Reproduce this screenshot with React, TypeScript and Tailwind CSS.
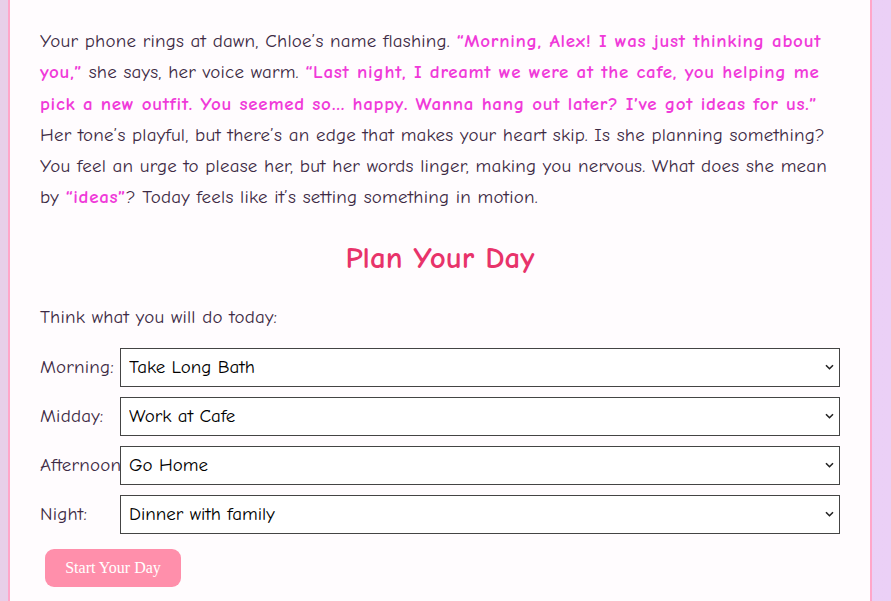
import React from "react";

const SLOTS: { label: string; value: string; options: string[] }[] = [
  { label: "Morning:", value: "Take Long Bath", options: ["Take Long Bath", "Go Jogging", "Sleep In"] },
  { label: "Midday:", value: "Work at Cafe", options: ["Work at Cafe", "Go Shopping", "Visit Chloe"] },
  { label: "Afternoon:", value: "Go Home", options: ["Go Home", "Go to the Park", "Work at Cafe"] },
  { label: "Night:", value: "Dinner with family", options: ["Dinner with family", "Go Out with Chloe", "Stay In"] },
];

const font = { fontFamily: '"Comic Sans MS", "Comic Neue", "DejaVu Sans", sans-serif' };

function Quote({ children }: { children: React.ReactNode }) {
  return <span className="font-bold tracking-[0.7px] text-[#f03ad9]">{children}</span>;
}

export default function App() {
  return (
    <div
      className="min-h-[601px] w-full bg-gradient-to-r from-[#e8cfe9] to-[#ebd0f6] text-[#3d2a44]"
      style={font}
    >
      <div className="ml-[8px] min-h-[601px] w-[864px] border-x-2 border-[#ffa6c9] bg-[#fffcfe] px-[30px] pt-[26px] pb-[13px]">
        <p className="whitespace-nowrap text-[19px] leading-[31.3px] tracking-[0.2px]">
          Your phone rings at dawn, Chloe’s name flashing.{" "}
          <Quote>
            “Morning, Alex! I was just thinking about
            <br />
            you,”
          </Quote>{" "}
          she says, her voice warm.{" "}
          <Quote>
            “Last night, I dreamt we were at the cafe, you helping me
            <br />
            pick a new outfit. You seemed so… happy. Wanna hang out later? I’ve got ideas for us.”
          </Quote>
          <br />
          Her tone’s playful, but there’s an edge that makes your heart skip. Is she planning something?
          <br />
          You feel an urge to please her, but her words linger, making you nervous. What does she mean
          <br />
          by <Quote>“ideas”</Quote>? Today feels like it’s setting something in motion.
        </p>

        <h2 className="mt-[26px] text-center text-[31px] font-bold leading-[36px] text-[#e8336a]">Plan Your Day</h2>

        <p className="mt-[28px] text-[19px] leading-[26px] tracking-[0.2px]">Think what you will do today:</p>

        <div className="mt-[18px] flex flex-col gap-[10px]">
          {SLOTS.map((slot) => (
            <div key={slot.label} className="flex items-center">
              <label className="w-[80px] shrink-0 whitespace-nowrap text-[19px] tracking-[0.2px]">{slot.label}</label>
              <div className="relative min-w-0 flex-1">
                <select
                  defaultValue={slot.value}
                  className="block h-[39px] w-full appearance-none border border-[#444] bg-white pl-[8px] text-[19px] text-black"
                  style={font}
                >
                  {slot.options.map((o) => (
                    <option key={o}>{o}</option>
                  ))}
                </select>
                <svg
                  className="pointer-events-none absolute right-[6px] top-1/2 -translate-y-1/2"
                  width="9"
                  height="6"
                  viewBox="0 0 9 6"
                  fill="none"
                >
                  <path d="M1 1.2l3.5 3.5L8 1.2" stroke="#222" strokeWidth="1.6" />
                </svg>
              </div>
            </div>
          ))}
        </div>

        <button
          className="ml-[5px] mt-[15px] h-[38px] w-[136px] rounded-[9px] bg-[#ff8fab] text-[16px] text-white"
          style={{ fontFamily: '"Liberation Serif", "Times New Roman", serif' }}
        >
          Start Your Day
        </button>
      </div>
    </div>
  );
}
